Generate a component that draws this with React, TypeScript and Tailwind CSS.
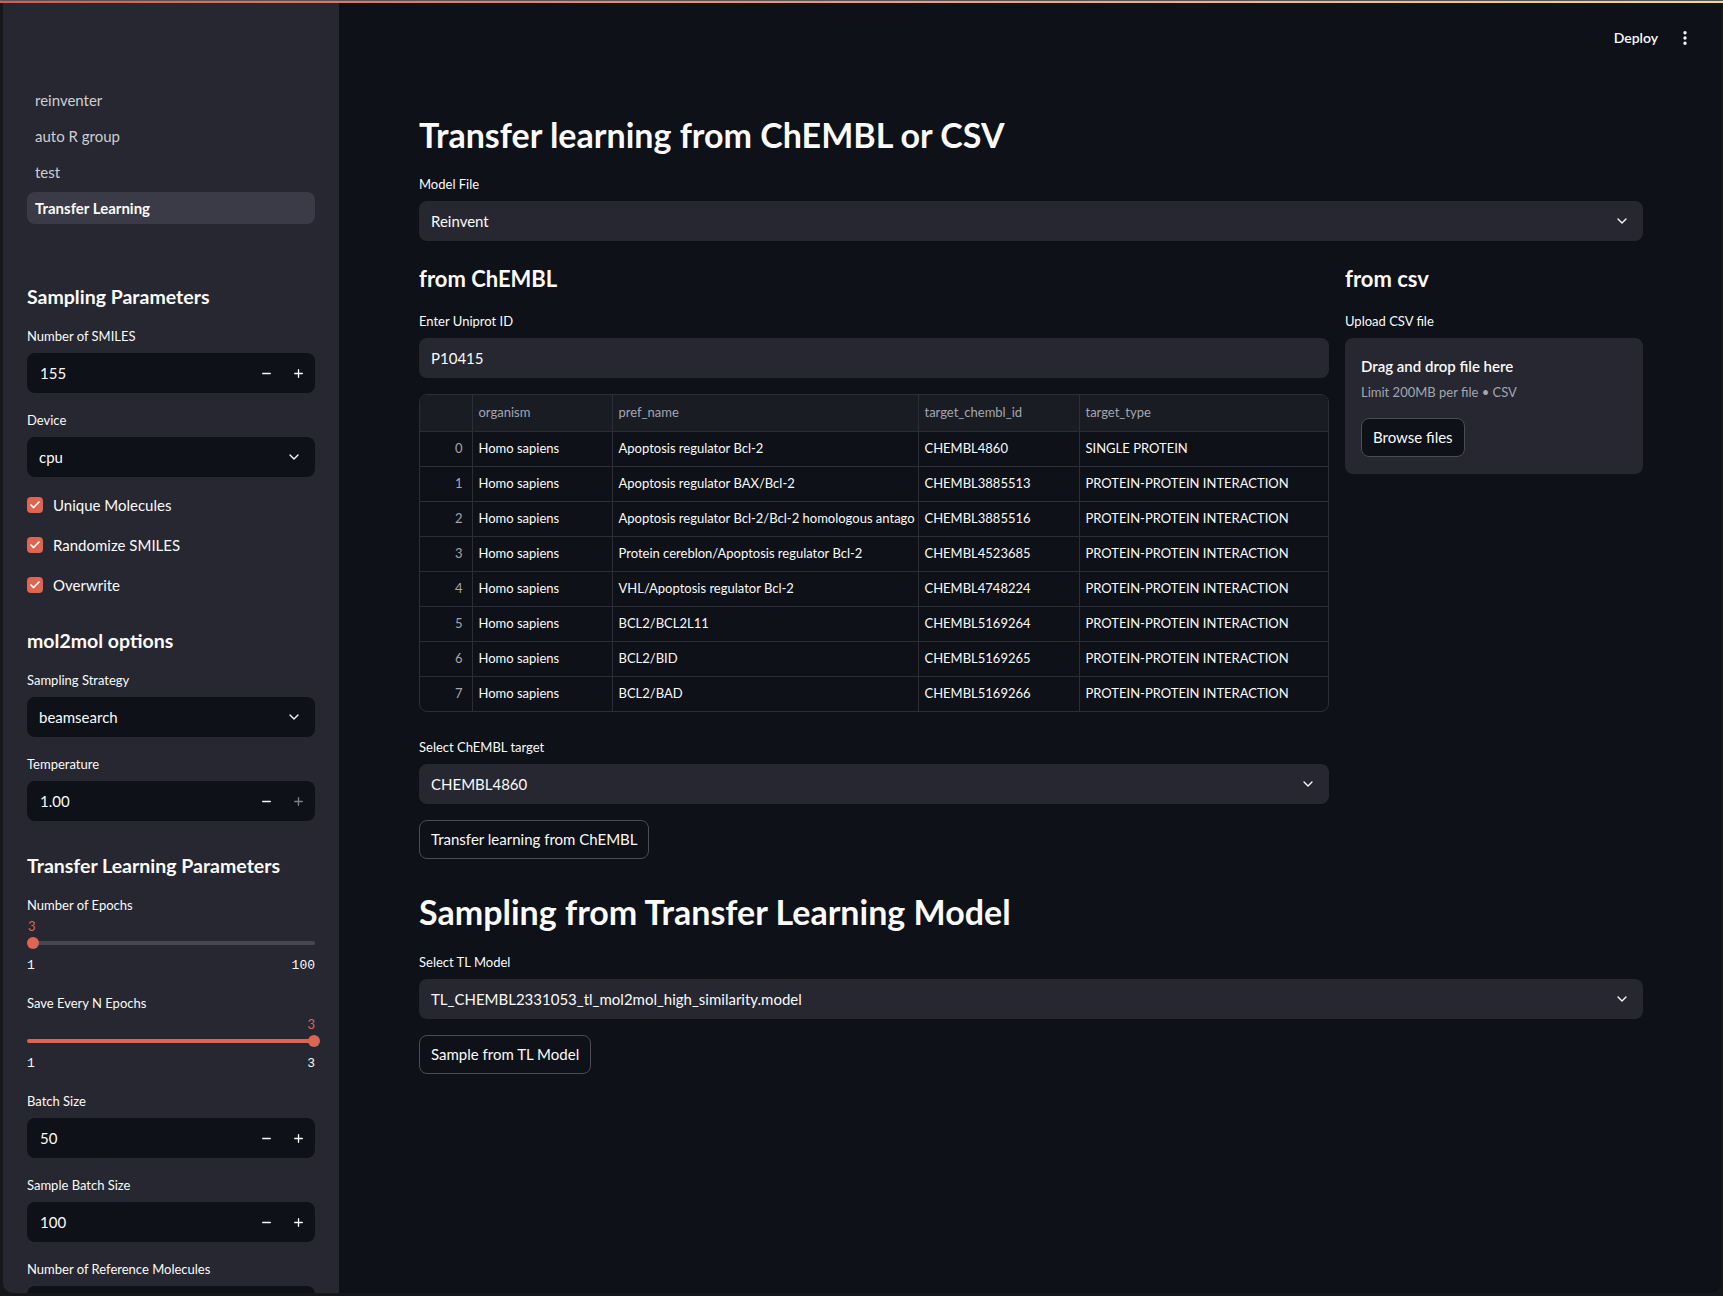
import { Check, ChevronDown, EllipsisVertical, Minus, Plus } from "lucide-react"

const rows = [
  ["Homo sapiens", "Apoptosis regulator Bcl-2", "CHEMBL4860", "SINGLE PROTEIN"],
  ["Homo sapiens", "Apoptosis regulator BAX/Bcl-2", "CHEMBL3885513", "PROTEIN-PROTEIN INTERACTION"],
  ["Homo sapiens", "Apoptosis regulator Bcl-2/Bcl-2 homologous antago", "CHEMBL3885516", "PROTEIN-PROTEIN INTERACTION"],
  ["Homo sapiens", "Protein cereblon/Apoptosis regulator Bcl-2", "CHEMBL4523685", "PROTEIN-PROTEIN INTERACTION"],
  ["Homo sapiens", "VHL/Apoptosis regulator Bcl-2", "CHEMBL4748224", "PROTEIN-PROTEIN INTERACTION"],
  ["Homo sapiens", "BCL2/BCL2L11", "CHEMBL5169264", "PROTEIN-PROTEIN INTERACTION"],
  ["Homo sapiens", "BCL2/BID", "CHEMBL5169265", "PROTEIN-PROTEIN INTERACTION"],
  ["Homo sapiens", "BCL2/BAD", "CHEMBL5169266", "PROTEIN-PROTEIN INTERACTION"],
]

function Label({ children }: { children: React.ReactNode }) {
  return <div className="h-6 mb-1 flex items-center text-[13px] text-[#fafafa]">{children}</div>
}

function NumberInput({ value, plusDim }: { value: string; plusDim?: boolean }) {
  return (
    <div className="h-10 rounded-lg bg-[#0e1117] flex items-center pl-[13px] pr-px">
      <span className="flex-1 text-[15px] text-[#fafafa]">{value}</span>
      <span className="w-8 flex justify-center text-[#fafafa]"><Minus size={13} strokeWidth={2.5} /></span>
      <span className={`w-8 flex justify-center ${plusDim ? "text-[#7d7f88]" : "text-[#fafafa]"}`}><Plus size={13} strokeWidth={2.5} /></span>
    </div>
  )
}

function Select({ value, dark }: { value: string; dark?: boolean }) {
  return (
    <div className={`h-10 rounded-lg flex items-center pl-3 pr-[13px] ${dark ? "bg-[#0e1117]" : "bg-[#262730]"}`}>
      <span className="flex-1 text-[15px] text-[#fafafa]">{value}</span>
      <ChevronDown size={16} strokeWidth={2} className="text-[#fafafa]" />
    </div>
  )
}

function Checkbox({ label }: { label: string }) {
  return (
    <div className="h-6 flex items-center gap-[10px]">
      <span className="w-4 h-4 rounded-[4px] bg-[#dd6551] flex items-center justify-center">
        <Check size={12} strokeWidth={3.5} className="text-white" />
      </span>
      <span className="text-[15px] text-[#fafafa]">{label}</span>
    </div>
  )
}

function SideHeading({ children, pt = "pt-[14px]" }: { children: React.ReactNode; pt?: string }) {
  return <div className={`${pt} leading-[25px] text-[19.5px] font-bold text-[#fafafa]`}>{children}</div>
}

function Slider({ value, min, max, full }: { value: string; min: string; max: string; full?: boolean }) {
  return (
    <div className="relative h-[58px]">
      <div className={`absolute top-0 h-4 leading-4 text-[13px] text-[#dd6551] ${full ? "right-0" : "left-[1px]"}`}>{value}</div>
      <div className={`absolute top-[23px] left-0 right-0 h-1 rounded-full ${full ? "bg-[#dd6551]" : "bg-[#464751]"}`} />
      <div className={`absolute top-[19px] w-3 h-3 rounded-full bg-[#dd6551] ${full ? "right-[-5px]" : "left-0"}`} />
      <div className="absolute top-[40px] left-0 right-0 flex justify-between text-[13px] leading-4 text-[#fafafa] font-['Liberation_Mono',monospace]">
        <span>{min}</span>
        <span>{max}</span>
      </div>
    </div>
  )
}

function Button({ children }: { children: React.ReactNode }) {
  return (
    <div className="inline-flex h-[39px] items-center px-[11px] rounded-lg border border-[#4a4c56] bg-[#0e1117] text-[15px] text-[#fafafa]">
      {children}
    </div>
  )
}

export default function App() {
  return (
    <div className="h-[1296px] w-full bg-[#16171b] overflow-hidden flex flex-col font-[Lato,sans-serif]">
      <div className="h-px bg-[#55565d]" />
      <div className="h-[2px] bg-linear-to-r from-[#e05a4b] to-[#f5da80]" />
      <div className="flex flex-1 ml-[3px] mr-[2px] mb-[3px] rounded-b-[10px] overflow-hidden">
        <aside className="w-[336px] shrink-0 bg-[#262730] flex flex-col">
          <nav className="pt-[81px] px-6 flex flex-col gap-1">
            {["reinventer", "auto R group", "test"].map((n) => (
              <div key={n} className="h-8 flex items-center px-2 text-[15px] text-[#cdced4]">{n}</div>
            ))}
            <div className="h-8 flex items-center px-2 rounded-lg bg-[#3a3b46] text-[15px] font-bold text-[#fafafa]">Transfer Learning</div>
          </nav>
          <div className="mt-5 ml-[6px] mr-3 h-px bg-[#4a4b55]" />
          <div className="px-6 pt-[26px] flex flex-col gap-4">
            <SideHeading>Sampling Parameters</SideHeading>
            <div>
              <Label>Number of SMILES</Label>
              <NumberInput value="155" />
            </div>
            <div>
              <Label>Device</Label>
              <Select value="cpu" dark />
            </div>
            <Checkbox label="Unique Molecules" />
            <Checkbox label="Randomize SMILES" />
            <Checkbox label="Overwrite" />
            <SideHeading pt="pt-[15px]">mol2mol options</SideHeading>
            <div>
              <Label>Sampling Strategy</Label>
              <Select value="beamsearch" dark />
            </div>
            <div>
              <Label>Temperature</Label>
              <NumberInput value="1.00" plusDim />
            </div>
            <SideHeading pt="pt-[16px]">Transfer Learning Parameters</SideHeading>
            <div>
              <div className="h-6 flex items-center text-[13px] text-[#fafafa]">Number of Epochs</div>
              <Slider value="3" min="1" max="100" />
            </div>
            <div>
              <div className="h-6 flex items-center text-[13px] text-[#fafafa]">Save Every N Epochs</div>
              <Slider value="3" min="1" max="3" full />
            </div>
            <div>
              <Label>Batch Size</Label>
              <NumberInput value="50" />
            </div>
            <div>
              <Label>Sample Batch Size</Label>
              <NumberInput value="100" />
            </div>
            <div>
              <Label>Number of Reference Molecules</Label>
              <NumberInput value="" />
            </div>
          </div>
        </aside>

        <main className="relative flex-1 bg-[#0e1117]">
          <div className="absolute top-[24px] right-[27px] flex items-center gap-[18px] text-[#fafafa]">
            <span className="text-[14px] font-semibold">Deploy</span>
            <EllipsisVertical size={18} strokeWidth={2.5} />
          </div>

          <div className="pl-20 pr-[78px] pt-[107px]">
            <h1 className="h-12 flex items-center text-[34px] font-bold text-[#fafafa]">Transfer learning from ChEMBL or CSV</h1>
            <div className="mt-[15px]">
              <Label>Model File</Label>
              <Select value="Reinvent" />
            </div>

            <div className="mt-[21px] grid grid-cols-[1fr_298px] gap-4">
              <div>
                <h3 className="h-8 flex items-center text-[22px] font-bold text-[#fafafa]">from ChEMBL</h3>
                <div className="mt-4">
                  <Label>Enter Uniprot ID</Label>
                  <div className="h-10 rounded-lg bg-[#262730] flex items-center pl-3 text-[15px] text-[#fafafa]">P10415</div>
                </div>

                <div className="mt-4 rounded-lg border border-[#2c2e37] overflow-hidden">
                  <table className="w-full table-fixed border-collapse text-[13px]">
                    <colgroup>
                      <col className="w-[52px]" />
                      <col className="w-[140px]" />
                      <col className="w-[306px]" />
                      <col className="w-[161px]" />
                      <col />
                    </colgroup>
                    <thead>
                      <tr className="h-9 bg-[#1a1c24]">
                        <th className="border-r border-b border-[#2c2e37]" />
                        {["organism", "pref_name", "target_chembl_id", "target_type"].map((h, i) => (
                          <th key={h} className={`border-b border-[#2c2e37] pl-[6px] pr-1 text-left font-normal text-[#a3a6b0] ${i < 3 ? "border-r" : ""}`}>{h}</th>
                        ))}
                      </tr>
                    </thead>
                    <tbody>
                      {rows.map((r, ri) => (
                        <tr key={ri} className="h-[35px]">
                          <td className={`border-r border-[#2c2e37] pr-[9px] text-right text-[#a3a6b0] ${ri < rows.length - 1 ? "border-b" : ""}`}>{ri}</td>
                          {r.map((c, ci) => (
                            <td key={ci} className={`border-[#2c2e37] pl-[6px] pr-0 whitespace-nowrap overflow-hidden text-clip text-[#fafafa] ${ci < 3 ? "border-r" : ""} ${ri < rows.length - 1 ? "border-b" : ""}`}>{c}</td>
                          ))}
                        </tr>
                      ))}
                    </tbody>
                  </table>
                </div>

                <div className="mt-6">
                  <Label>Select ChEMBL target</Label>
                  <Select value="CHEMBL4860" />
                </div>
                <div className="mt-4">
                  <Button>Transfer learning from ChEMBL</Button>
                </div>
              </div>

              <div>
                <h3 className="h-8 flex items-center text-[22px] font-bold text-[#fafafa]">from csv</h3>
                <div className="mt-4">
                  <Label>Upload CSV file</Label>
                  <div className="rounded-lg bg-[#262730] p-4 pb-[17px]">
                    <div className="h-6 flex items-center text-[15px] font-semibold text-[#fafafa]">Drag and drop file here</div>
                    <div className="mt-[5px] h-5 flex items-center text-[13px] text-[#a3a6b0]">Limit 200MB per file • CSV</div>
                    <div className="mt-[15px]">
                      <Button>Browse files</Button>
                    </div>
                  </div>
                </div>
              </div>
            </div>

            <h1 className="mt-7 h-12 flex items-center text-[34px] font-bold text-[#fafafa]">Sampling from Transfer Learning Model</h1>
            <div className="mt-4">
              <Label>Select TL Model</Label>
              <Select value="TL_CHEMBL2331053_tl_mol2mol_high_similarity.model" />
            </div>
            <div className="mt-4">
              <Button>Sample from TL Model</Button>
            </div>
          </div>
        </main>
      </div>
    </div>
  )
}
